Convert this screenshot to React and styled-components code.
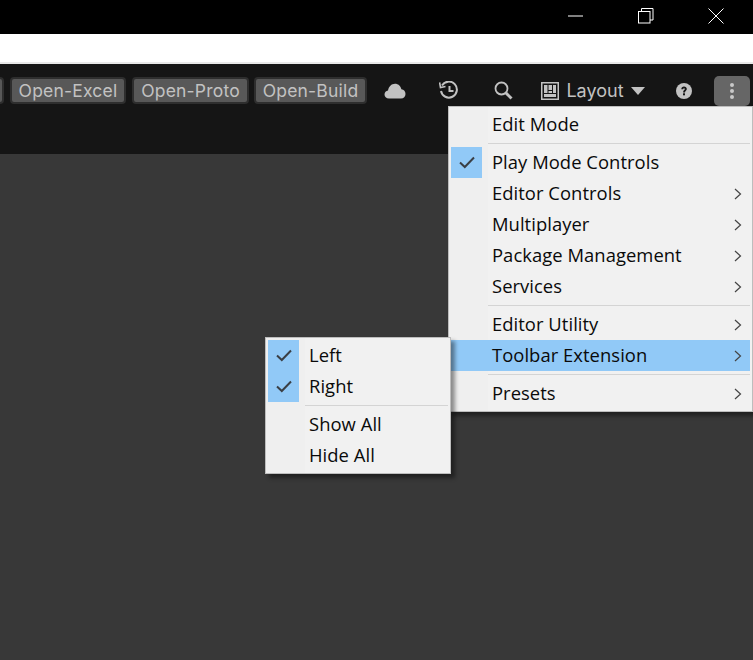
import React from "react";
import styled, { createGlobalStyle } from "styled-components";

const Global = createGlobalStyle`
  html, body { margin: 0; padding: 0; background: #383838; }
  #root { width: 753px; height: 660px; overflow: hidden; }
`;
const Page = styled.div`
  position: relative;
  width: 753px;
  height: 660px;
  overflow: hidden;
  display: flex;
  flex-direction: column;
  background: #383838;
`;
const TitleBar = styled.div`
  height: 34px;
  flex: none;
  box-sizing: border-box;
  padding-right: 2px;
  background: #000;
  display: flex;
  justify-content: flex-end;
`;
const WinButton = styled.div`
  width: 70px;
  height: 32px;
  display: flex;
  align-items: center;
  justify-content: center;
  color: #fff;
`;
const AddressBar = styled.div`
  height: 28px;
  flex: none;
  background: #fff;
  border-bottom: 2px solid #e8e8e8;
`;
const Toolbar = styled.div`
  height: 90px;
  flex: none;
  box-sizing: border-box;
  background: #151515;
  padding: 13px 3px 0 0;
  display: flex;
  justify-content: flex-end;
  align-items: flex-start;
  overflow: hidden;
  font-family: Inter, "Liberation Sans", sans-serif;
  color: #c2c2c2;
`;
const ToolButton = styled.div`
  flex: none;
  box-sizing: border-box;
  height: 27px;
  width: ${p => p.$w}px;
  margin-right: ${p => p.$gap ?? 6}px;
  background: #585858;
  border: 2px solid #2e2e2e;
  border-radius: 4px;
  display: flex;
  align-items: center;
  justify-content: center;
  font-size: 17.5px;
  letter-spacing: 0.2px;
  white-space: nowrap;
`;
const IconSlot = styled.div`
  flex: none;
  height: 27px;
  width: ${p => p.$w}px;
  margin-right: ${p => p.$gap ?? 0}px;
  display: flex;
  align-items: center;
  justify-content: center;
  gap: 7px;
  font-size: 18px;
`;
const MoreButton = styled.div`
  flex: none;
  width: 36px;
  height: 30px;
  margin-top: -1px;
  background: #666;
  border-radius: 5px;
  display: flex;
  align-items: center;
  justify-content: center;
`;
const Menu = styled.div`
  position: absolute;
  left: ${p => p.$x}px;
  top: ${p => p.$y}px;
  width: ${p => p.$w}px;
  box-sizing: border-box;
  padding: 2px;
  background: linear-gradient(90deg, #efefef 39px, #f1f1f1 39px);
  border: 1px solid #bdbdbd;
  box-shadow: 4px 4px 4px rgba(0, 0, 0, 0.42);
  font-family: "Open Sans", "Noto Sans", sans-serif;
  font-size: 18.4px;
  letter-spacing: 0.05px;
  color: #0a0a0a;
  z-index: ${p => p.$z};
`;
const Row = styled.div`
  height: 31px;
  display: flex;
  align-items: center;
  background: ${p => (p.$active ? "#91c9f7" : "transparent")};
  position: relative;
`;
const Check = styled.div`
  width: 31px;
  height: 31px;
  flex: none;
  background: ${p => (p.$on ? "#91c9f7" : "transparent")};
  display: flex;
  align-items: center;
  justify-content: center;
`;
const Label = styled.span`
  margin: 0 0 2px 10px;
  line-height: 29px;
  white-space: nowrap;
`;
const Arrow = styled.div`
  margin-left: auto;
  margin-right: 8px;
  display: flex;
`;
const Separator = styled.div`
  height: 7px;
  margin-left: 37px;
  display: flex;
  align-items: center;
  &::after {
    content: "";
    display: block;
    width: 100%;
    height: 1px;
    background: #d4d4d4;
  }
`;

const CheckIcon = () => (
  <svg width="16" height="13" viewBox="0 0 16 13" fill="none">
    <path d="M1 6.5 L5.8 11 L15 1.5" stroke="#3a3f45" strokeWidth="2" />
  </svg>
);
const ArrowIcon = () => (
  <svg width="8" height="12" viewBox="0 0 8 12" fill="none">
    <path d="M1 1 L6.5 6 L1 11" stroke="#444" strokeWidth="1.2" />
  </svg>
);

function Item({ label, on, sub, active }) {
  return (
    <Row $active={active}>
      <Check $on={on}>{on && <CheckIcon />}</Check>
      <Label>{label}</Label>
      {sub && <Arrow><ArrowIcon /></Arrow>}
    </Row>
  );
}

export default function App() {
  return (
    <Page>
      <Global />
      <TitleBar>
        <WinButton>
          <svg width="16" height="2" viewBox="0 0 16 2"><path d="M0 1H15" stroke="#fff" strokeWidth="1" /></svg>
        </WinButton>
        <WinButton>
          <svg width="16" height="16" viewBox="0 0 16 16" fill="none" stroke="#fff" strokeWidth="1">
            <rect x="0.5" y="3.5" width="11.5" height="11.5" />
            <path d="M3.5 3.5V0.5H15V12H12" />
          </svg>
        </WinButton>
        <WinButton>
          <svg width="16" height="16" viewBox="0 0 16 16" fill="none" stroke="#fff" strokeWidth="1">
            <path d="M0.5 0.5L15.5 15.5M15.5 0.5L0.5 15.5" />
          </svg>
        </WinButton>
      </TitleBar>
      <AddressBar />
      <Toolbar>
        <ToolButton $w={60} />
        <ToolButton $w={116}>Open-Excel</ToolButton>
        <ToolButton $w={117} $gap={5}>Open-Proto</ToolButton>
        <ToolButton $w={113} $gap={13}>Open-Build</ToolButton>
        <IconSlot $w={30} $gap={24}>
          <svg width="22" height="16" viewBox="0 0 22 16" fill="#c2c2c2">
            <path d="M5 15.5C2.2 15.5 0.5 13.8 0.5 11.5C0.5 9.3 2 7.8 4 7.6C4.6 3.7 7.5 0.8 11 0.8C14.2 0.8 16.6 3 17.4 6.2C20 6.5 21.5 8.5 21.5 11C21.5 13.7 19.7 15.5 17 15.5Z" />
          </svg>
        </IconSlot>
        <IconSlot $w={30} $gap={24}>
          <svg width="20" height="19" viewBox="0 0 20 19" fill="none" stroke="#c2c2c2" strokeWidth="2">
            <path d="M3 4.5A8 8 0 1 1 2 10" />
            <path d="M0.6 1.5L1.5 6.5L6.5 5.5" strokeWidth="1.6" />
            <path d="M10.5 5V10H14.5" />
          </svg>
        </IconSlot>
        <IconSlot $w={30} $gap={19}>
          <svg width="19" height="19" viewBox="0 0 19 19" fill="none" stroke="#c2c2c2">
            <circle cx="7.5" cy="7.5" r="6" strokeWidth="1.8" />
            <path d="M12 12L17.5 17.5" strokeWidth="3" />
          </svg>
        </IconSlot>
        <IconSlot $w={112} $gap={25}>
          <svg width="18" height="18" viewBox="0 0 18 18">
            <rect width="18" height="18" fill="#c2c2c2" />
            <rect x="1.5" y="1.5" width="15" height="15" fill="#151515" />
            <path d="M3 3H6.5V11H3ZM7.5 3H11V8H7.5ZM12 3H15V11H12ZM3 12H15V15H3ZM7.5 9H11V11H7.5Z" fill="#c2c2c2" />
          </svg>
          <span>Layout</span>
          <svg width="14" height="8" viewBox="0 0 14 8" fill="#c2c2c2">
            <path d="M0 0H14L7 8Z" />
          </svg>
        </IconSlot>
        <IconSlot $w={20} $gap={20}>
          <svg width="16" height="16" viewBox="0 0 16 16">
            <circle cx="8" cy="8" r="8" fill="#c2c2c2" />
            <path d="M5.3 6.2C5.3 4.6 6.5 3.6 8 3.6C9.6 3.6 10.8 4.6 10.8 6C10.8 7.6 9 7.8 9 9.4H7.1C7.1 7.2 8.8 7.2 8.8 6C8.8 5.5 8.5 5.2 8 5.2C7.5 5.2 7.2 5.6 7.2 6.2Z" fill="#151515" />
            <rect x="7" y="10.3" width="2" height="2" fill="#151515" />
          </svg>
        </IconSlot>
        <MoreButton>
          <svg width="4" height="16" viewBox="0 0 4 16" fill="#c8c8c8">
            <circle cx="2" cy="2" r="2" /><circle cx="2" cy="8" r="2" /><circle cx="2" cy="14" r="2" />
          </svg>
        </MoreButton>
      </Toolbar>

      <Menu $x={448} $y={106} $w={305} $z={1}>
        <Item label="Edit Mode" />
        <Separator />
        <Item label="Play Mode Controls" on />
        <Item label="Editor Controls" sub />
        <Item label="Multiplayer" sub />
        <Item label="Package Management" sub />
        <Item label="Services" sub />
        <Separator />
        <Item label="Editor Utility" sub />
        <Item label="Toolbar Extension" sub active />
        <Separator />
        <Item label="Presets" sub />
      </Menu>

      <Menu $x={265} $y={337} $w={186} $z={2}>
        <Item label="Left" on />
        <Item label="Right" on />
        <Separator />
        <Item label="Show All" />
        <Item label="Hide All" />
      </Menu>
    </Page>
  );
}
